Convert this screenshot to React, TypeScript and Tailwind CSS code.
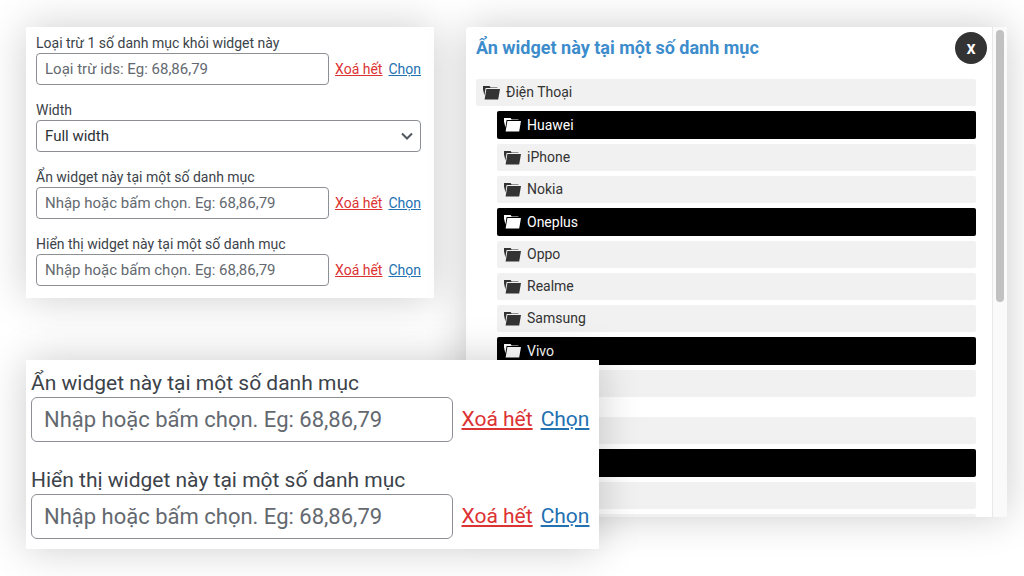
import clsx from 'clsx'
import type { FC } from 'react'
import React, { useId, useState } from 'react'

type Size = 'md' | 'lg'

interface Category {
  id: number
  name: string
  child?: boolean
  newGroup?: boolean
}

const CATEGORIES: Category[] = [
  { id: 60, name: 'Điện Thoại' },
  { id: 61, name: 'Huawei', child: true },
  { id: 62, name: 'iPhone', child: true },
  { id: 63, name: 'Nokia', child: true },
  { id: 64, name: 'Oneplus', child: true },
  { id: 65, name: 'Oppo', child: true },
  { id: 66, name: 'Realme', child: true },
  { id: 67, name: 'Samsung', child: true },
  { id: 68, name: 'Vivo', child: true },
  { id: 69, name: '', child: true },
  { id: 70, name: '', newGroup: true },
  { id: 71, name: '', child: true },
  { id: 72, name: '', child: true },
  { id: 73, name: '', child: true }
]

const FolderIcon: FC = () => (
  <svg
    className="h-[14px] w-[17px] flex-none"
    viewBox="0 0 17 14"
    fill="currentColor"
    aria-hidden="true"
  >
    <path d="M0 0h6.6l1 1.4H14.4v.7H2.6L1.4 9.6 0 3.4z" />
    <path d="M3.4 3H17L15.2 13.6H1.6z" />
  </svg>
)

interface FieldProps {
  label: string
  placeholder: string
  size?: Size
}

const IdsField: FC<FieldProps> = ({ label, placeholder, size = 'md' }) => {
  const id = useId()
  const [value, setValue] = useState('')
  const large = size === 'lg'

  return (
    <div>
      <label
        htmlFor={id}
        className={clsx(
          'block text-[#3c434a]',
          large ? 'text-[21px] leading-7' : 'text-[14px] leading-5'
        )}
      >
        {label}
      </label>
      <div
        className={clsx(
          'flex items-center',
          large ? 'gap-2 text-[21px]' : 'gap-[6px] text-[14px]'
        )}
      >
        <input
          id={id}
          type="text"
          value={value}
          onChange={(e) => setValue(e.target.value)}
          placeholder={placeholder}
          className={clsx(
            'min-w-0 flex-1 border border-[#8c8f94] bg-white text-[#2c3338] placeholder:text-[#646970] placeholder:opacity-100',
            large
              ? 'h-[45px] rounded-[6px] px-3 text-[22px]'
              : 'h-8 rounded-[4px] px-2 text-[15px]'
          )}
        />
        <a
          href="#clear"
          onClick={() => setValue('')}
          className="text-[#dc3232] underline"
        >
          Xoá hết
        </a>
        <a href="#choose" className="text-[#2271b1] underline">
          Chọn
        </a>
      </div>
    </div>
  )
}

const WidthField: FC = () => (
  <div>
    <label
      htmlFor="width"
      className="block text-[14px] leading-5 text-[#3c434a]"
    >
      Width
    </label>
    <div className="relative">
      <select
        id="width"
        className="h-8 w-full appearance-none rounded-[4px] border border-[#8c8f94] bg-white px-2 text-[15px] text-[#2c3338]"
      >
        <option>Full width</option>
      </select>
      <svg
        className="pointer-events-none absolute top-3 right-2 h-2 w-3"
        viewBox="0 0 12 8"
        fill="none"
        stroke="#50575e"
        strokeWidth="2"
        aria-hidden="true"
      >
        <path d="M1 1.5l5 5 5-5" />
      </svg>
    </div>
  </div>
)

const CategoryDialog: FC = () => {
  const [selected, setSelected] = useState([61, 64, 68, 71])

  const toggle = (id: number) => {
    setSelected((ids) =>
      ids.includes(id) ? ids.filter((i) => i !== id) : [...ids, id]
    )
  }

  return (
    <section
      role="dialog"
      aria-labelledby="dialog-title"
      className="flex h-[85vh] min-w-0 overflow-hidden rounded-tl-[4px] bg-white shadow-[0_0_40px_rgba(0,0,0,0.2)]"
    >
      <div className="min-w-0 flex-1">
        <header className="flex items-center justify-between pt-[5px] pr-[5px] pl-[10px]">
          <h2
            id="dialog-title"
            className="text-[18px] leading-6 font-bold text-[#3d8ccc]"
          >
            Ẩn widget này tại một số danh mục
          </h2>
          <button
            type="button"
            className="h-8 w-8 rounded-full bg-[#333] text-[18px] leading-8 font-semibold text-white"
          >
            x
          </button>
        </header>
        <ul className="mt-[15px] flex flex-col gap-[5px] pr-4 pl-[10px]">
          {CATEGORIES.map(({ id, name, child, newGroup }) => {
            const active = selected.includes(id)
            return (
              <li
                key={id}
                className={clsx(child && 'pl-[21px]', newGroup && 'mt-[15px]')}
              >
                <button
                  type="button"
                  aria-pressed={active}
                  onClick={() => toggle(id)}
                  className={clsx(
                    'flex w-full items-center gap-[6px] rounded-[2px] px-[7px] text-left text-[14px]',
                    active
                      ? 'h-7 bg-black text-white'
                      : 'h-[27px] bg-[#f1f1f1] text-[#333]'
                  )}
                >
                  <FolderIcon />
                  {name}
                </button>
              </li>
            )
          })}
        </ul>
      </div>
      <div className="w-[15px] flex-none border-l border-[#e8e8e8] bg-[#fafafa] px-[3px] pt-[3px]">
        <div className="h-[56%] rounded-full bg-[#c1c1c1]" />
      </div>
    </section>
  )
}

const App: FC = () => {
  return (
    <main className="relative min-h-screen overflow-hidden bg-white font-['Roboto','Inter',sans-serif]">
      <div className="grid grid-cols-[408fr_541fr] items-start gap-8 pt-[27px] pr-[17px] pl-[26px]">
        <section className="flex min-w-0 flex-col gap-[15px] bg-white pt-[6px] pr-[13px] pb-3 pl-[10px] shadow-[0_0_40px_rgba(0,0,0,0.2)]">
          <IdsField
            label="Loại trừ 1 số danh mục khỏi widget này"
            placeholder="Loại trừ ids: Eg: 68,86,79"
          />
          <WidthField />
          <IdsField
            label="Ẩn widget này tại một số danh mục"
            placeholder="Nhập hoặc bấm chọn. Eg: 68,86,79"
          />
          <IdsField
            label="Hiển thị widget này tại một số danh mục"
            placeholder="Nhập hoặc bấm chọn. Eg: 68,86,79"
          />
        </section>
        <CategoryDialog />
      </div>
      {/* enlarged fields, laid over the corner of the dialog */}
      <section className="absolute top-[360px] left-[26px] flex w-[56%] flex-col gap-6 bg-white pt-[9px] pr-[10px] pb-[10px] pl-[5px] shadow-[0_0_40px_rgba(0,0,0,0.2)]">
        <IdsField
          size="lg"
          label="Ẩn widget này tại một số danh mục"
          placeholder="Nhập hoặc bấm chọn. Eg: 68,86,79"
        />
        <IdsField
          size="lg"
          label="Hiển thị widget này tại một số danh mục"
          placeholder="Nhập hoặc bấm chọn. Eg: 68,86,79"
        />
      </section>
    </main>
  )
}

export default App
